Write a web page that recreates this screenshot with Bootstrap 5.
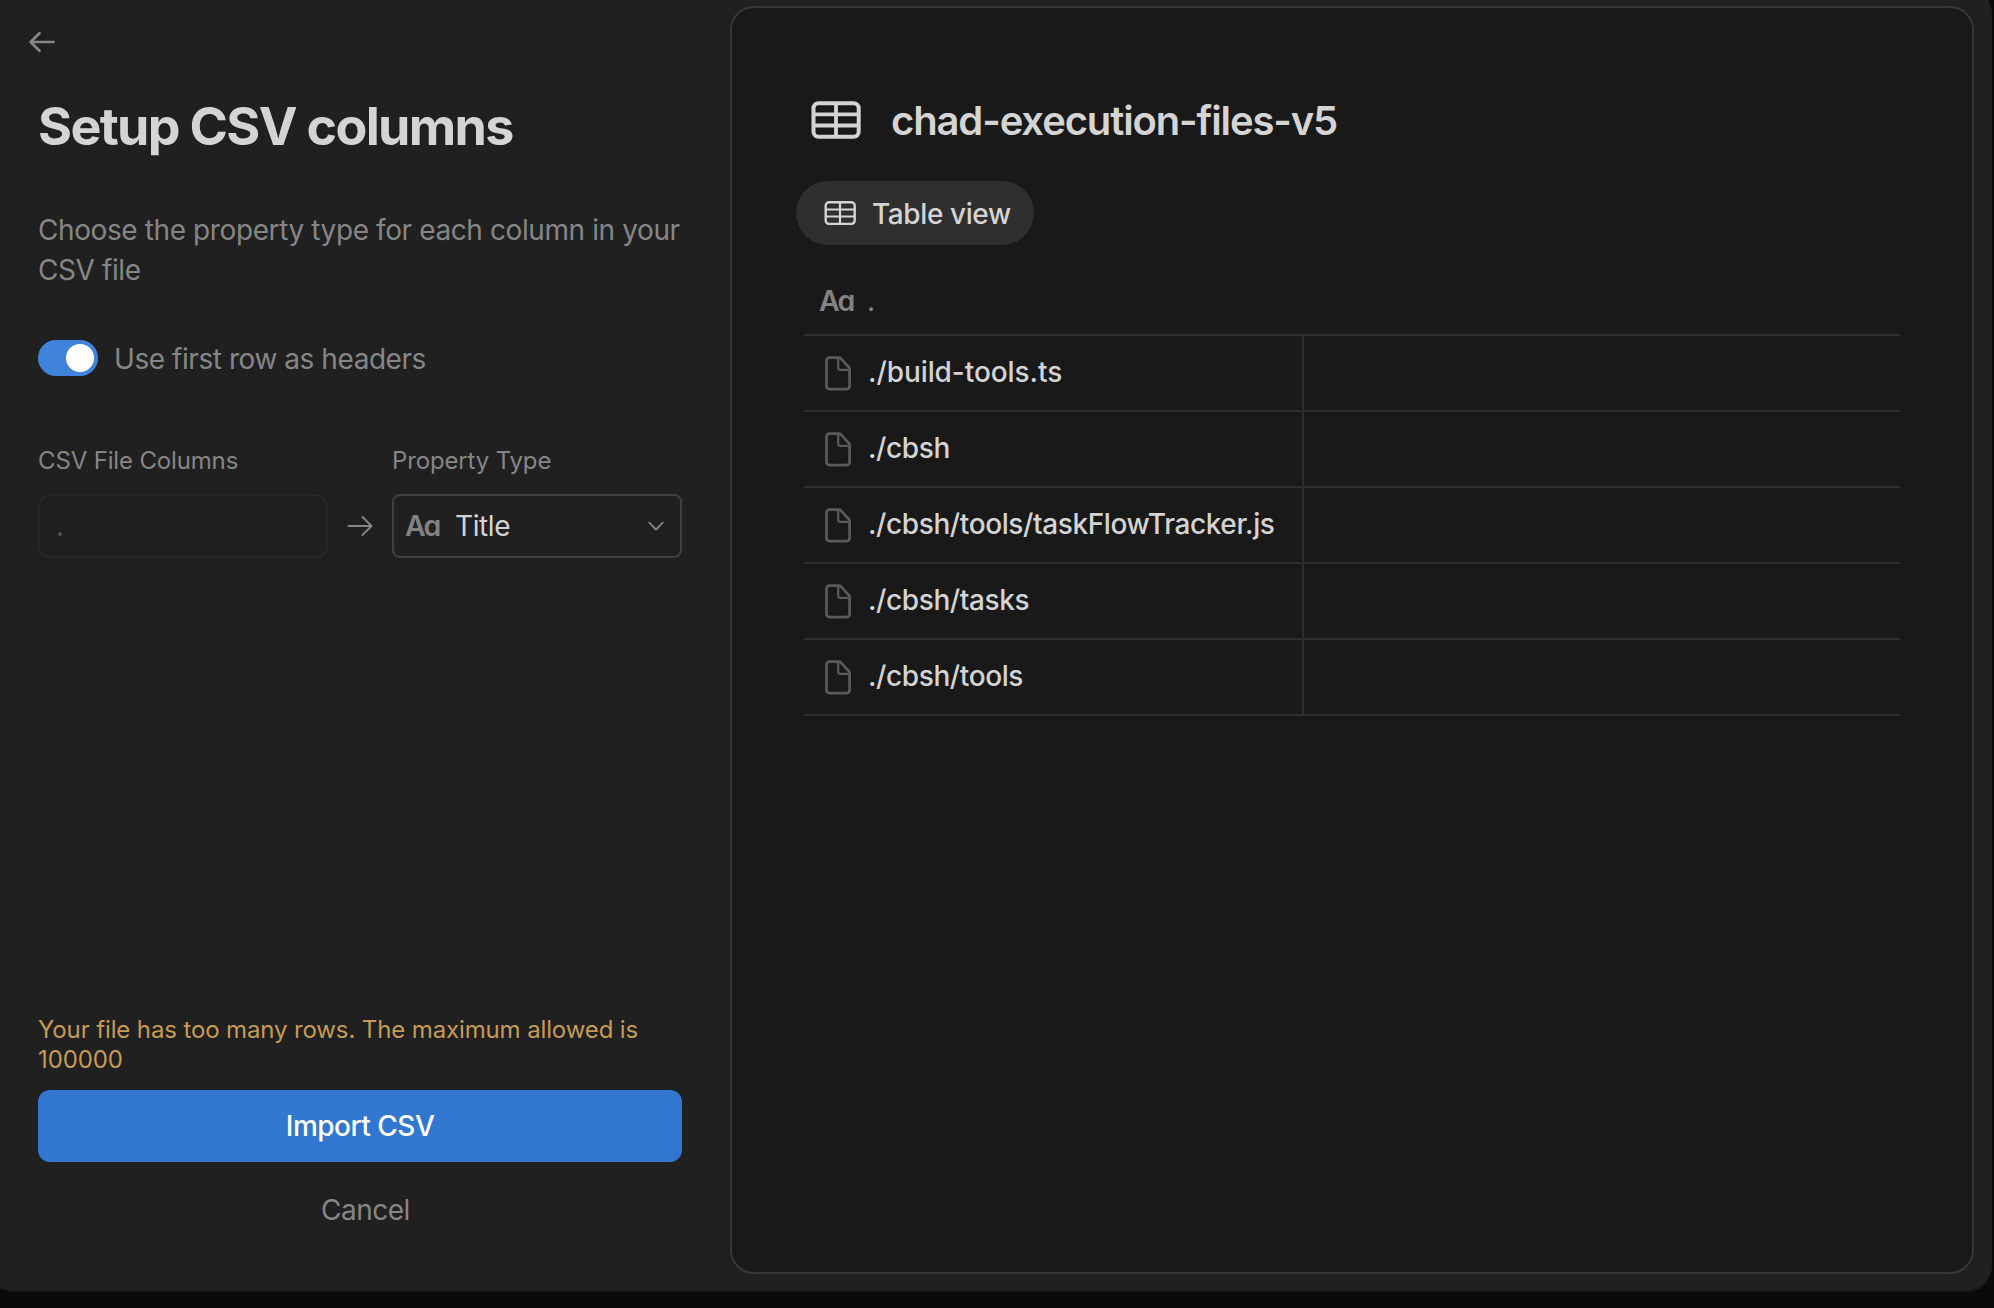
<!DOCTYPE html>
<html lang="en" data-bs-theme="dark">
<head>
<meta charset="utf-8">
<meta name="viewport" content="width=device-width, initial-scale=1">
<title>Setup CSV columns</title>
<link href="https://cdn.jsdelivr.net/npm/bootstrap@5.3.0/dist/css/bootstrap.min.css" rel="stylesheet">
<style>
body{background:#0a0a0a;font-family:Inter,"Liberation Sans",sans-serif;font-size:28px;line-height:40px;letter-spacing:-.4px;color:#d4d4d4;height:1308px}
.dialog-shell{width:2004px;height:1304px;margin:-12px 0 0 -12px;padding-left:12px;padding-top:12px;background:#202020;border-radius:26px;box-shadow:inset 0 -2px 0 #1a1a1a}
.side-pane{width:730px;padding:0 48px 0 38px}
.muted-text{color:#868686}
.back-btn{width:26px;height:20px;margin:32px 0 0 -9px;line-height:0}
.pane-title{font-size:52px;line-height:60px;font-weight:700;letter-spacing:-1.67px;margin:45px 0 0;color:#d4d4d4}
.pane-desc{margin:53px 0 0}
.switch-row{margin-top:50px;gap:16px}
.switch-row .form-check-input{width:60px;height:36px;margin:0;border:0;background-color:#4083db;background-image:radial-gradient(circle at 42px 18px,#fff 13.6px,transparent 14.4px)!important;background-position:0 0;background-size:100% 100%;float:none}
.switch-row .form-check{padding:0;min-height:0;line-height:0}
.switch-row label{line-height:36px;letter-spacing:-.44px}
.map-row{margin-top:68px}
.field-label{font-size:24px;line-height:30px;margin-bottom:18px;letter-spacing:-.15px}
.map-col{width:290px}
.field-box{height:64px;border:2px solid #282828;border-radius:12px;padding:0 16px;color:#525252}
.type-select{border-color:#3f3f3f;border-radius:8px;padding:0 16px 0 11px;color:#d4d4d4}
.type-name{padding-left:14px}
.aa-glyph{font-size:28.5px;width:36px;font-weight:600;letter-spacing:-1.9px;font-feature-settings:"cv11";color:#828282}
.arrow-cell{width:64px;height:64px}
.warn-text{color:#c59b56;font-size:24px;line-height:30px;margin-bottom:15px;letter-spacing:-.125px}
.import-btn{height:72px;background:#3177cf;border:0;border-radius:12px;color:#fff;font-size:28px;line-height:40px;font-weight:500;letter-spacing:-.5px}
.cancel-link{width:655px;margin:28px 0 62px;letter-spacing:-.5px}
.preview-pane{width:1244px;height:1268px;margin-top:6px;border:2px solid #383838;border-radius:24px;background:#191919;padding:89px 72px 0}
.file-title{font-size:40px;line-height:48px;font-weight:600;letter-spacing:-1.13px;gap:30px;padding-left:7px}
.file-title svg{margin-bottom:2px}
.view-pill{width:238px;height:64px;margin:36px 0 0 -8px;border-radius:32px;background:#2f2f2f;padding-left:28px;gap:16px;font-weight:500;letter-spacing:-.4px}
.view-pill span{padding-top:1px}
.grid-row{height:76px;border-bottom:2px solid #2e2e2e}
.name-cell{width:500px;border-right:2px solid #2e2e2e;padding-left:20px;gap:16px;font-weight:500}
.name-cell span{padding-bottom:2px}
.name-cell svg{color:#5a5a5a}
.wide-name{letter-spacing:-.08px}
.head-row{height:91px;padding-left:15px;border-bottom:2px solid #2e2e2e;padding-top:36px;gap:12px;color:#828282}
</style>
</head>
<body class="overflow-hidden">
<svg class="d-none">
  <symbol id="grid-lg" viewBox="0 0 50 38"><rect x="2.500" y="2.200" width="45.200" height="33.600" rx="5" fill="none" stroke="currentColor" stroke-width="4"/><path d="M2 13.300h46M2 24.500h46M25 2v34" fill="none" stroke="currentColor" stroke-width="3.800"/></symbol>
  <symbol id="grid-sm" viewBox="0 0 32 24"><rect x="1.700" y="1.300" width="29" height="21.600" rx="3.300" fill="none" stroke="currentColor" stroke-width="2.400"/><path d="M1.500 8.500h29.500M1.500 15.500h29.500M16 1v22" fill="none" stroke="currentColor" stroke-width="2.200"/></symbol>
  <symbol id="page" viewBox="0 0 28 36"><path d="M5.500 2.600H15a2.400 2.400 0 0 1 1.800.8l8.200 9a2.400 2.400 0 0 1 .6 1.600v17.200a3 3 0 0 1-3 3H5.500a3 3 0 0 1-3-3V5.600a3 3 0 0 1 3-3Z" fill="none" stroke="currentColor" stroke-width="2.800"/><path d="M14.200 3v9.800a2 2 0 0 0 2 2h9" fill="none" stroke="currentColor" stroke-width="2.200"/></symbol>
</svg>
<main class="dialog-shell d-flex align-items-start">
  <section class="side-pane d-flex flex-column flex-shrink-0 h-100">
    <a class="back-btn muted-text" href="#" aria-label="Back"><svg width="26" height="20" viewBox="0 0 26 20" fill="none" stroke="currentColor" stroke-width="2.700" stroke-linecap="round" stroke-linejoin="round"><path d="M10.500 1.200 1.600 10l8.900 8.800M2 10h22.500"/></svg></a>
    <h1 class="pane-title">Setup CSV columns</h1>
    <p class="pane-desc muted-text">Choose the property type for each column in your CSV file</p>
    <div class="switch-row d-flex align-items-center muted-text">
      <div class="form-check form-switch"><input class="form-check-input" type="checkbox" role="switch" id="hdr" checked></div>
      <label for="hdr">Use first row as headers</label>
    </div>
    <div class="map-row d-flex">
      <div class="map-col">
        <div class="field-label muted-text">CSV File Columns</div>
        <div class="field-box d-flex align-items-center">.</div>
      </div>
      <div class="arrow-cell d-flex align-items-center justify-content-center align-self-end muted-text"><svg width="26" height="20" viewBox="0 0 26 20" fill="none" stroke="currentColor" stroke-width="1.900" stroke-linecap="round" stroke-linejoin="round"><path d="M1.500 10h23M15.500 1l9 9-9 9"/></svg></div>
      <div class="map-col">
        <div class="field-label muted-text">Property Type</div>
        <div class="field-box type-select d-flex align-items-center">
          <span class="aa-glyph">Aa</span><span class="type-name flex-grow-1">Title</span>
          <svg width="16" height="10" viewBox="0 0 16 10" fill="none" stroke="#868686" stroke-width="1.800" stroke-linecap="round" stroke-linejoin="round"><path d="M1.200 1.700 8 8.500l6.800-6.800"/></svg>
        </div>
      </div>
    </div>
    <div class="mt-auto warn-text">Your file has too many rows. The maximum allowed is 100000</div>
    <button type="button" class="btn import-btn w-100 p-0">Import CSV</button>
    <a class="cancel-link muted-text text-center text-decoration-none" href="#">Cancel</a>
  </section>
  <section class="preview-pane flex-shrink-0">
    <div class="file-title d-flex align-items-center"><svg width="50" height="38"><use href="#grid-lg"/></svg><span>chad-execution-files-v5</span></div>
    <div class="view-pill d-flex align-items-center"><svg width="32" height="24"><use href="#grid-sm"/></svg><span>Table view</span></div>
    <div class="head-row d-flex"><span class="aa-glyph">Aa</span><span>.</span></div>
    <div class="grid-row d-flex"><div class="name-cell d-flex align-items-center"><svg width="28" height="36"><use href="#page"/></svg><span class="wide-name">./build-tools.ts</span></div></div>
    <div class="grid-row d-flex"><div class="name-cell d-flex align-items-center"><svg width="28" height="36"><use href="#page"/></svg><span>./cbsh</span></div></div>
    <div class="grid-row d-flex"><div class="name-cell d-flex align-items-center"><svg width="28" height="36"><use href="#page"/></svg><span>./cbsh/tools/taskFlowTracker.js</span></div></div>
    <div class="grid-row d-flex"><div class="name-cell d-flex align-items-center"><svg width="28" height="36"><use href="#page"/></svg><span>./cbsh/tasks</span></div></div>
    <div class="grid-row d-flex"><div class="name-cell d-flex align-items-center"><svg width="28" height="36"><use href="#page"/></svg><span>./cbsh/tools</span></div></div>
  </section>
</main>
</body>
</html>
